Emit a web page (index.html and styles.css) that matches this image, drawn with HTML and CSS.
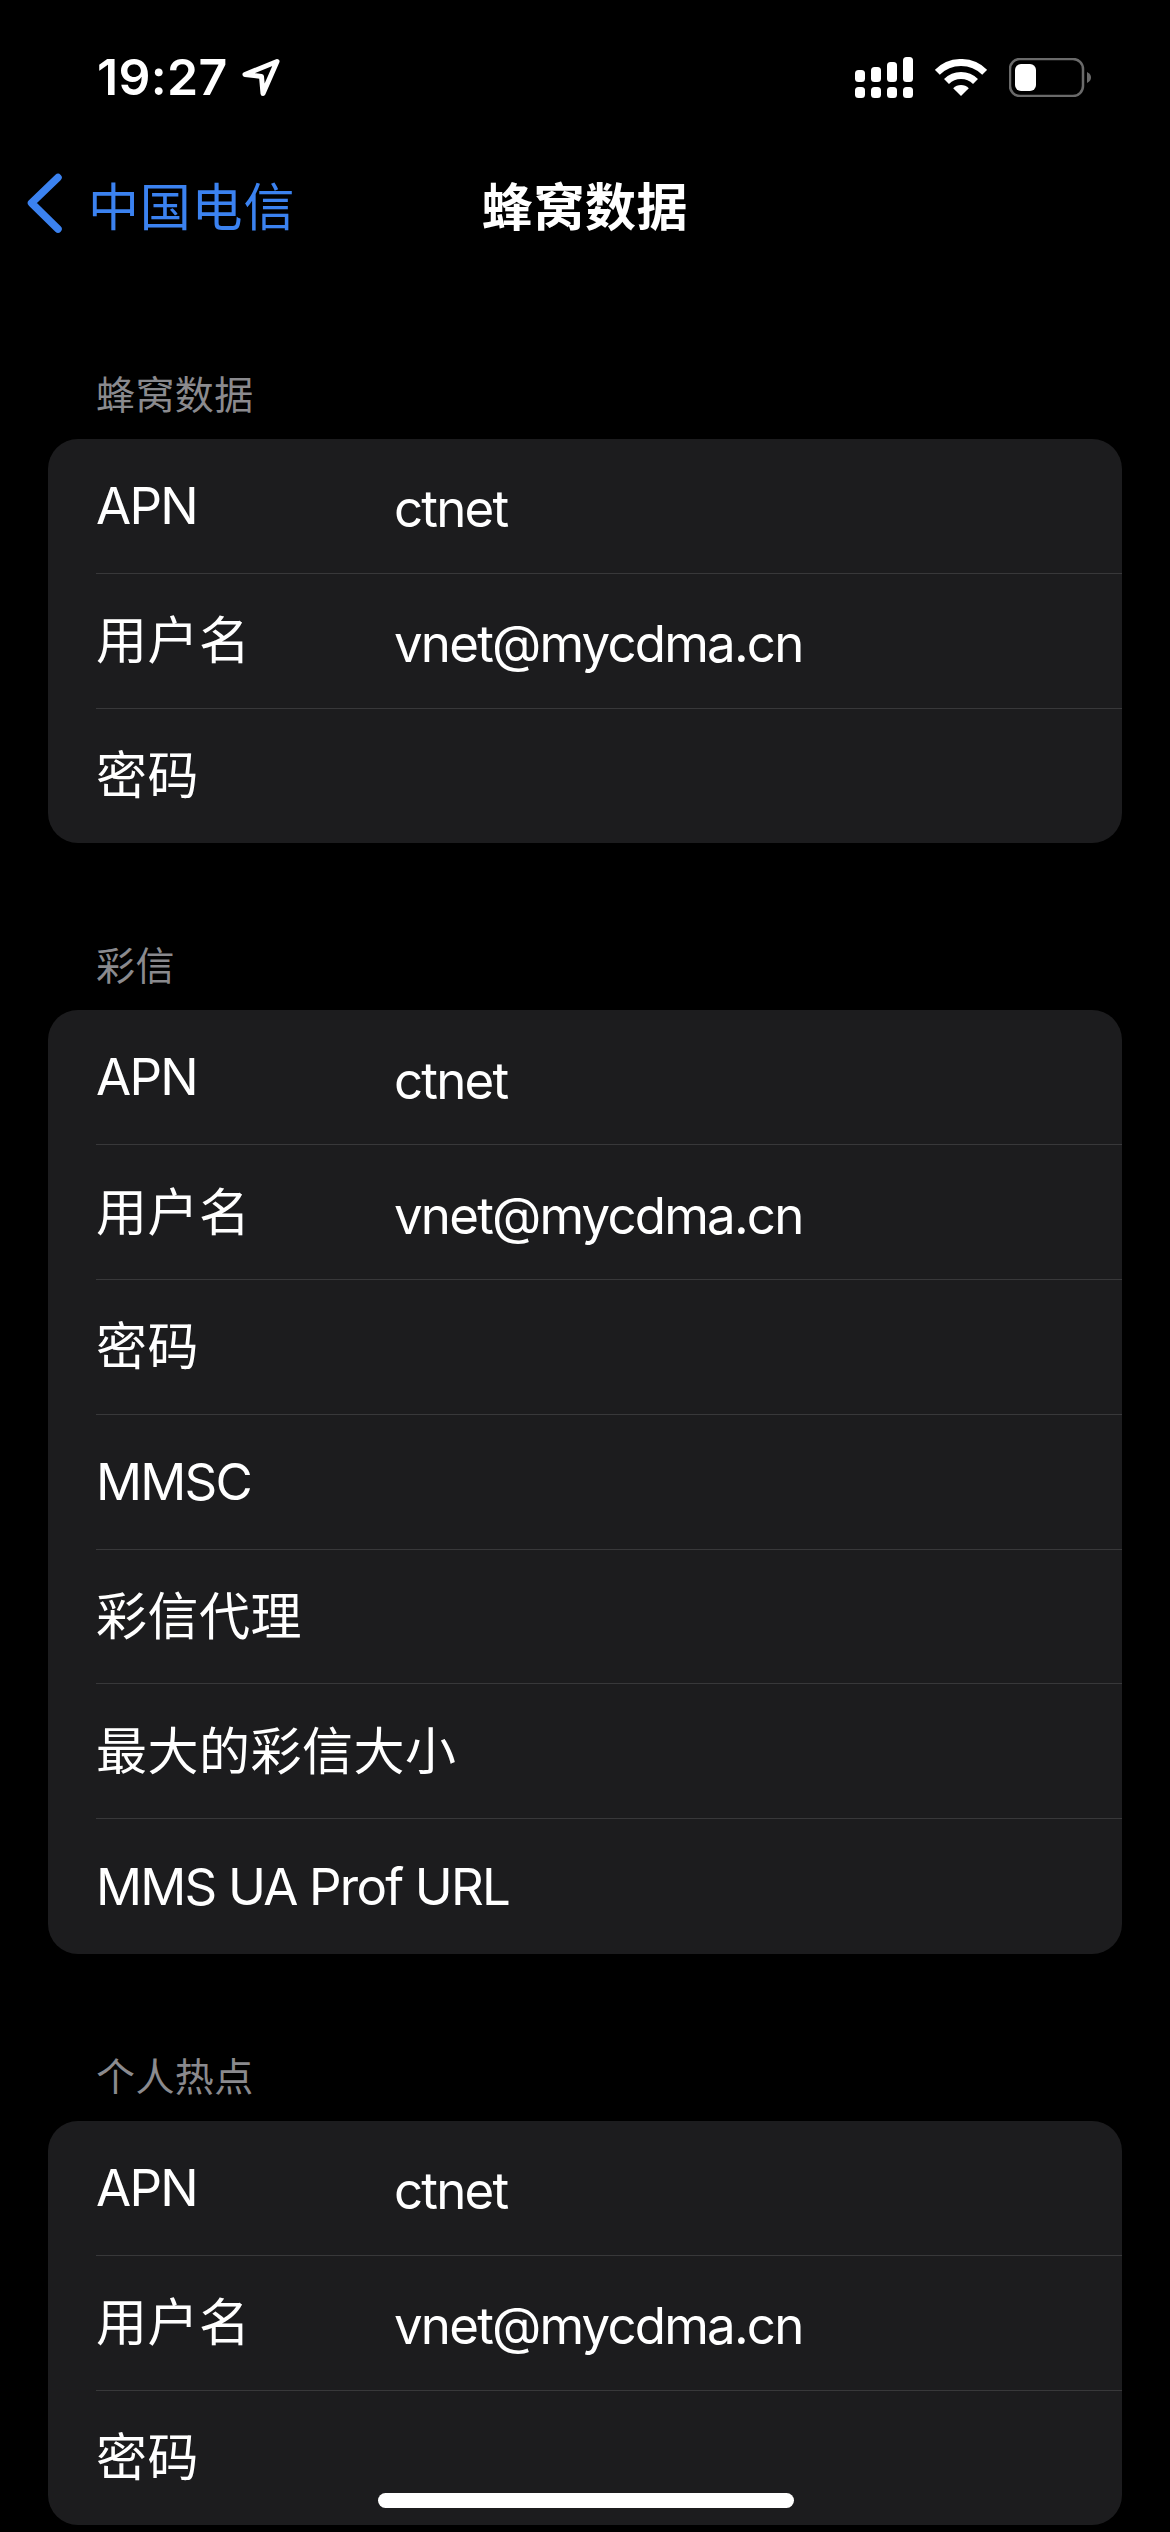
FILE: index.html
```html
<!DOCTYPE html>
<html lang="zh-CN">
<head>
    <meta charset="utf-8">
    <title>蜂窝数据</title>
    <link rel="stylesheet" href="styles.css">
</head>
<body>
<div class="screen">
    <div class="status">
        <div class="status-left">
            <span class="time">19:27</span>
            <svg class="icon-location" width="40" height="40" viewBox="0 0 40 40">
                <path d="M36 3.500 L4 16.500 L20.500 18.500 L22 35.500 Z" fill="none" stroke="#fff" stroke-width="5" stroke-linejoin="round"/>
            </svg>
        </div>
        <div class="status-right">
            <svg width="58" height="41" viewBox="0 0 58 41" fill="#fff">
                <rect x="0" y="13" width="10" height="12" rx="3.500"/>
                <rect x="16" y="10" width="10" height="15" rx="3.500"/>
                <rect x="32" y="5" width="10" height="20" rx="3.500"/>
                <rect x="48" y="0" width="10" height="25" rx="3.500"/>
                <rect x="0" y="30" width="10" height="11" rx="3.500"/>
                <rect x="16" y="30" width="10" height="11" rx="3.500"/>
                <rect x="32" y="30" width="10" height="11" rx="3.500"/>
                <rect x="48" y="30" width="10" height="11" rx="3.500"/>
            </svg>
            <svg width="52" height="38" viewBox="0 0 52 38">
                <path d="M2.300 13.300 A33.500 33.500 0 0 1 49.700 13.300" fill="none" stroke="#fff" stroke-width="7"/>
                <path d="M11.500 22.500 A20.500 20.500 0 0 1 40.500 22.500" fill="none" stroke="#fff" stroke-width="7"/>
                <path d="M26 37 L18.200 29.200 A11 11 0 0 1 33.800 29.200 Z" fill="#fff"/>
            </svg>
            <svg width="82" height="39" viewBox="0 0 82 39">
                <rect x="1" y="1" width="73" height="37" rx="10" fill="none" stroke="#6a6a6a" stroke-width="2.500"/>
                <rect x="6" y="6" width="21" height="27" rx="6" fill="#fff"/>
                <path d="M78 14 C81 15.500 82 17.500 82 19.500 C82 21.500 81 23.500 78 25 Z" fill="#6a6a6a"/>
            </svg>
        </div>
    </div>

    <div class="nav">
        <div class="nav-back">
            <svg width="36" height="62" viewBox="0 0 36 62">
                <path d="M31 4.500 L4.500 30 L31 56" fill="none" stroke="#3b82f0" stroke-width="7.500" stroke-linecap="round" stroke-linejoin="round"/>
            </svg>
            <span>中国电信</span>
        </div>
        <div class="nav-title">蜂窝数据</div>
    </div>

    <div class="section-head">蜂窝数据</div>
    <div class="card">
        <div class="row"><span class="label latin">APN</span><span class="value">ctnet</span></div>
        <div class="row"><span class="label">用户名</span><span class="value">vnet@mycdma.cn</span></div>
        <div class="row"><span class="label">密码</span></div>
    </div>

    <div class="section-head">彩信</div>
    <div class="card">
        <div class="row"><span class="label latin">APN</span><span class="value">ctnet</span></div>
        <div class="row"><span class="label">用户名</span><span class="value">vnet@mycdma.cn</span></div>
        <div class="row"><span class="label">密码</span></div>
        <div class="row"><span class="label latin">MMSC</span></div>
        <div class="row"><span class="label">彩信代理</span></div>
        <div class="row"><span class="label">最大的彩信大小</span></div>
        <div class="row"><span class="label latin">MMS UA Prof URL</span></div>
    </div>

    <div class="section-head">个人热点</div>
    <div class="card">
        <div class="row"><span class="label latin">APN</span><span class="value">ctnet</span></div>
        <div class="row"><span class="label">用户名</span><span class="value">vnet@mycdma.cn</span></div>
        <div class="row"><span class="label">密码</span></div>
    </div>

    <div class="home-bar"></div>
</div>
</body>
</html>
```

FILE: styles.css
```css
* {
    box-sizing: border-box;
}

html, body {
    margin: 0;
    padding: 0;
    background: #000;
}

.screen {
    position: relative;
    width: 1170px;
    height: 2532px;
    overflow: hidden;
    background: #000;
    color: #fff;
    font-family: "Inter", "Noto Sans CJK SC", sans-serif;
}

/* status bar */
.status {
    height: 132px;
    padding: 57px 79px 0 97px;
    display: flex;
    justify-content: space-between;
    align-items: flex-start;
}

.status-left {
    display: flex;
    align-items: center;
    gap: 13px;
    height: 41px;
}

.time {
    font-size: 50px;
    font-weight: 600;
    line-height: 41px;
    letter-spacing: 0.3px;
}

.status-right {
    display: flex;
    align-items: center;
    gap: 22px;
}

/* nav bar */
.nav {
    height: 140px;
    padding: 4px 0 0 27px;
    display: grid;
    grid-template-columns: 1fr auto 1fr;
    align-items: center;
}

.nav-back {
    display: flex;
    align-items: center;
    gap: 25px;
    color: #3b82f0;
    font-size: 51px;
    letter-spacing: 0.8px;
}

.nav-title {
    font-size: 51px;
    font-weight: 700;
    margin-left: -27px;
    letter-spacing: 0.6px;
}

/* list */
.section-head {
    height: 167px;
    padding: 0 0 22px 96px;
    display: flex;
    align-items: flex-end;
    color: #8a8a8e;
    font-size: 39px;
    line-height: 44px;
    letter-spacing: 0.4px;
}

.card {
    margin: 0 48px;
    padding-left: 48px;
    background: #1c1c1e;
    border-radius: 30px;
}

.row {
    height: 134.8px;
    display: flex;
    align-items: center;
    border-bottom: 1.5px solid #38383a;
    font-size: 51px;
    letter-spacing: 0.5px;
}

.row:last-child {
    border-bottom: none;
}

.label {
    min-width: 298px;
    margin-bottom: 7px;
}

.label.latin {
    margin-bottom: 1px;
    letter-spacing: -1.8px;
}

.value {
    margin-top: 6px;
    letter-spacing: -1.8px;
}

/* overlay at the bottom of the screen */
.home-bar {
    position: absolute;
    left: 378px;
    top: 2493px;
    width: 416px;
    height: 15px;
    border-radius: 8px;
    background: #fff;
}
```
